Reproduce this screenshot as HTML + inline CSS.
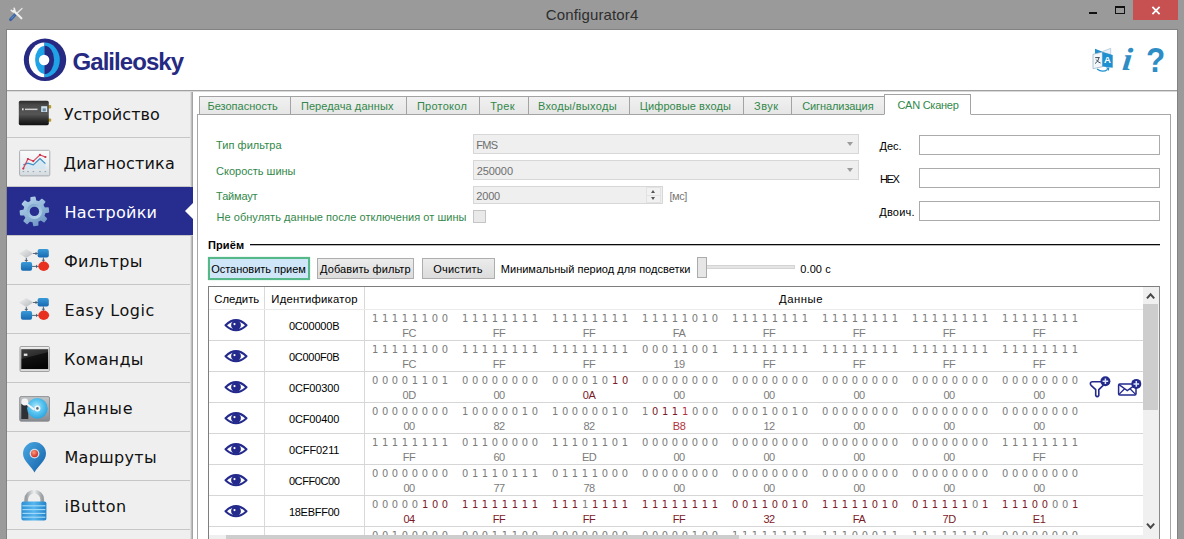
<!DOCTYPE html>
<html lang="ru"><head><meta charset="utf-8"><title>Configurator4</title>
<style>
html,body{margin:0;padding:0;background:#999;}
body{width:1184px;height:539px;overflow:hidden;position:relative;font-family:"Liberation Sans",sans-serif;}
.abs{position:absolute}
.t{position:absolute;white-space:pre;line-height:1}
#win{position:absolute;left:0;top:0;width:1184px;height:539px;background:#9a9a9a;overflow:hidden}
.titlebar{position:absolute;left:0;top:0;width:1184px;height:30px}
.header{position:absolute;left:7px;top:30px;width:1170px;height:60px;background:#fff;z-index:4}
.header>.abs{ }
.frame{position:absolute;left:6px;top:29px;width:1172px;height:520px;box-sizing:border-box;border:1px solid #828282;z-index:9;pointer-events:none}
.hshadow{position:absolute;left:7px;top:90px;width:1170px;height:2px;background:linear-gradient(#9f9f9f 0,#9f9f9f 50%,#d9d9d9 50%,#d9d9d9 100%);z-index:5}
.sidebar{position:absolute;left:7px;top:89px;width:186px;height:450px;background:#efefef;overflow:hidden}
.sitem{position:absolute;left:0;width:186px;height:49px;box-sizing:border-box;border-bottom:1px solid #c6c6c6}
.sitem.active{background:#262d8f;z-index:3}
.notch{position:absolute;right:0;top:16px;width:0;height:0;border-top:8px solid transparent;border-bottom:8px solid transparent;border-right:8.5px solid #fff}
.sideedge{position:absolute;left:183px;top:0;width:3px;height:450px;background:linear-gradient(90deg,#dedede 0,#dedede 33.3%,#bebebe 33.3%,#bebebe 66.6%,#a3a3a3 66.6%);z-index:2}
.content{position:absolute;left:0;top:0;width:1184px;height:539px}
.content:before{content:"";position:absolute;left:193px;top:92px;width:984px;height:447px;background:#fff}
.pane{position:absolute;left:197px;top:114px;width:974px;height:440px;box-sizing:border-box;border:1px solid #a6a6a6;background:#fff}
.tab{position:absolute;top:96px;height:19px;box-sizing:border-box;border:1px solid #a3a3a3;background:linear-gradient(#f1f1f1,#e6e6e6)}
.tab.act{top:94px;height:21px;background:#fff;border-bottom-color:#fff}
.combo{position:absolute;box-sizing:border-box;border:1px solid #d7d7d7;background:#efefef}
.combo .dd{position:absolute;right:5px;top:7px;width:0;height:0;border-left:3.5px solid transparent;border-right:3.5px solid transparent;border-top:4px solid #9c9c9c}
.combo .sp{position:absolute;right:1px;top:0;width:13px;height:14px;border:1px solid #e2e2e2;background:linear-gradient(#f1f1f1 0,#f1f1f1 50%,#e2e2e2 50%,#e2e2e2 57%,#f1f1f1 57%)}
.combo .up{position:absolute;left:4px;top:2px;width:0;height:0;border-left:2.5px solid transparent;border-right:2.5px solid transparent;border-bottom:3px solid #555}
.combo .dn{position:absolute;left:4px;top:9px;width:0;height:0;border-left:2.5px solid transparent;border-right:2.5px solid transparent;border-top:3px solid #555}
.chk{position:absolute;width:13px;height:13px;box-sizing:border-box;border:1px solid #c4c4c4;background:#e9e9e9}
.inp{position:absolute;box-sizing:border-box;border:1px solid #ababab;background:#fff}
.btn{position:absolute;box-sizing:border-box;border:1px solid #adadad;background:linear-gradient(#ececec,#dcdcdc)}
.btn.b1{border:2px solid #54b889;background:#cfe6f8;box-shadow:0 0 1px #8fd0ac}
.track{position:absolute;box-sizing:border-box;border:1px solid #d4d4d4;background:#e4e4e4}
.thumb{position:absolute;box-sizing:border-box;border:1px solid #ababab;background:#e6e6e6}
.table{position:absolute;left:208px;top:286px;width:952px;height:260px;box-sizing:border-box;border:1px solid #7e7e7e;border-right-color:#8a8a8a;background:#fff}
.table:before{content:"";position:absolute;left:55px;top:0;width:1px;height:248px;background:#d9d9d9}
.table:after{content:"";position:absolute;left:155px;top:0;width:1px;height:248px;background:#d9d9d9}
.rowline{position:absolute;left:209px;width:934px;height:1px;background:#d6d6d6}
.vsb{position:absolute;left:1143px;top:287px;width:16px;height:252px;background:#f0f0f0}
.vth{position:absolute;left:0;top:17px;width:15px;height:106px;background:#cdcdcd}
.hsb{position:absolute;left:209px;top:535px;width:934px;height:10px;background:#efefef}
.hth{position:absolute;left:17px;top:0;width:513px;height:10px;background:#cdcdcd}
</style></head>
<body><div id="win">
<div class="titlebar">
<span class="t " id="t0" style='left:545.73px;top:7.00px;font:normal normal 15px/1 "Liberation Sans", sans-serif;color:#2d2d2d;letter-spacing:0.143px;'>Configurator4</span>
<svg class="abs" style="left:9px;top:7px" width="15" height="15" viewBox="0 0 15 15">
<path d="M5.4 8.4 L13 1.4" stroke="#e4e4e4" stroke-width="1.3" stroke-linecap="round"/>
<path d="M1.6 12.6 L5.6 8.2" stroke="#3561a6" stroke-width="2.9" stroke-linecap="round"/>
<path d="M2.2 11.6 L5 8.6" stroke="#6f97cf" stroke-width="0.9" stroke-linecap="round"/>
<path d="M4.8 3.8 L12.4 11.3" stroke="#efefef" stroke-width="2.1" stroke-linecap="round"/>
<path d="M2.3 3.3 L4.3 5 L5.9 3.9 L5.2 1.3" stroke="#efefef" stroke-width="1.6" fill="none" stroke-linejoin="round" stroke-linecap="round"/>
</svg>
<div class="abs" style="left:1089px;top:12px;width:8px;height:2px;background:#111"></div>
<div class="abs" style="left:1115px;top:6px;width:10px;height:8px;box-sizing:border-box;border:1px solid #111;border-top-width:2px"></div>
<div class="abs closebtn" style="left:1133px;top:0;width:45px;height:20px;background:#c75050"><svg width="45" height="20" viewBox="0 0 45 20"><path d="M19.4 6.9 L26.6 14.1 M26.6 6.9 L19.4 14.1" stroke="#fff" stroke-width="1.8"/></svg></div>
</div>
<div class="header">
<svg class="abs" style="left:16px;top:6px" width="50" height="50" viewBox="0 0 50 50">
<circle cx="22" cy="23.8" r="21.2" fill="#262a82"/>
<clipPath id="cl"><rect x="0" y="0" width="21.5" height="50"/></clipPath>
<clipPath id="cr"><rect x="21.5" y="0" width="28.5" height="50"/></clipPath>
<ellipse cx="21.5" cy="23.9" rx="15.6" ry="17.3" fill="#fff" clip-path="url(#cl)"/>
<ellipse cx="21.5" cy="23.9" rx="15.3" ry="17.3" fill="#1fa3e6" clip-path="url(#cr)"/>
<ellipse cx="21.5" cy="23.9" rx="9.4" ry="14" fill="#1fa3e6" clip-path="url(#cl)"/>
<ellipse cx="21.5" cy="23.9" rx="9.6" ry="14.2" fill="#262a82" clip-path="url(#cr)"/>
<circle cx="21.1" cy="24.05" r="5.2" fill="#fff"/>
</svg>
<span class="t " id="t1" style='left:65.52px;top:19.60px;font:normal bold 24px/1 "Liberation Sans", sans-serif;color:#262a82;letter-spacing:-0.952px;'>Galileosky</span>
<svg class="abs" style="left:1083px;top:16px" width="26" height="28" viewBox="0 0 26 28">
<path d="M5 2.7 L12.6 5.8 L12.6 7.2 L5 8 Z" fill="#1e8fcf"/>
<path d="M12.7 5.4 L20.7 2.3 L20.7 8.6 L12.7 6.2 Z" fill="#e9f1f7" stroke="#9bb6cb" stroke-width="0.6"/>
<path d="M3 8.3 L12.4 6 L12.4 20.7 L3 22.7 Z" fill="#f3f7fa" stroke="#8ea9bf" stroke-width="0.7"/>
<path d="M12.4 6 L22.7 9 L22.7 21.7 L12.4 20.4 Z" fill="#1e8fcf"/>
<path d="M5.2 11.6 H9.6 M9 11.6 Q8.6 15.2 5 17.6 M6.2 13.6 Q8 16.4 10.6 17" stroke="#2d3a4a" stroke-width="0.9" fill="none"/>
<path d="M7 23 Q12.5 27.2 17.6 23.4" stroke="#1e8fcf" stroke-width="1.2" fill="none"/>
<path d="M16 21.6 L19.4 21.6 L18.8 25 Z" fill="#1e8fcf"/>
</svg>
<span class="t " id="t2" style='left:1097.06px;top:25.10px;font:normal bold 9.5px/1 "Liberation Sans", sans-serif;color:#fff;'>A</span>
<span class="t " id="t3" style='left:1114.16px;top:13.20px;font:italic bold 32px/1 "Liberation Serif", serif;color:#2f8dc6;transform:skewX(-6deg) scaleX(1.1);transform-origin:0 100%;'>i</span>
<span class="t " id="t4" style='left:1139.42px;top:11.60px;font:normal bold 35px/1 "Liberation Sans", sans-serif;color:#2f8dc6;transform:scaleX(0.9);transform-origin:0 100%;'>?</span>
</div>
<div class="hshadow"></div>
<div class="frame"></div>
<div class="sidebar">
<div class="sitem" style="top:0px">
<svg class="abs" style="left:10px;top:10px" width="36" height="30" viewBox="0 0 36 30">
<defs><linearGradient id="gd" x1="0" y1="0" x2="0" y2="1"><stop offset="0" stop-color="#2c2c2c"/><stop offset="0.18" stop-color="#4a4a4a"/><stop offset="0.55" stop-color="#555"/><stop offset="0.8" stop-color="#2b2b2b"/><stop offset="1" stop-color="#111"/></linearGradient></defs>
<rect x="31" y="6" width="3.2" height="3.4" rx="1" fill="#b59a2a"/><rect x="31" y="19.4" width="3.2" height="3.4" rx="1" fill="#b59a2a"/>
<rect x="1.8" y="1.8" width="30" height="24.4" rx="1.6" fill="url(#gd)"/>
<rect x="5" y="9.3" width="1.6" height="2" fill="#ddd"/><rect x="8" y="9.6" width="12.5" height="1.5" fill="#cfcfcf"/>
<rect x="24.2" y="7.2" width="6" height="5.8" fill="#cfe3f0"/><rect x="25.6" y="9.4" width="3.2" height="3" fill="#6d8aa0"/>
</svg>
<span class="t sb" id="t5" style='left:56.68px;top:17.70px;font:normal normal 16px/1 "DejaVu Sans", "Liberation Sans", sans-serif;color:#111;letter-spacing:0.069px;'>Устройство</span>
</div>
<div class="sitem" style="top:49px">
<svg class="abs" style="left:10px;top:10px" width="36" height="30" viewBox="0 0 36 30">
<defs><linearGradient id="gc" x1="0" y1="0" x2="0" y2="1"><stop offset="0" stop-color="#fbfbfb"/><stop offset="0.6" stop-color="#e9eef1"/><stop offset="1" stop-color="#d3d9dd"/></linearGradient></defs>
<rect x="2.6" y="2.3" width="30.2" height="25.6" rx="1.3" fill="url(#gc)" stroke="#a3a7aa" stroke-width="0.9"/>
<path d="M6.3 16.9 L10.9 15.2 L16.3 16.9 L23 10.6 L28.4 15.6 L28.4 21 L6.3 21 Z" fill="#cfe6f3" opacity="0.7"/>
<path d="M6.3 16.9 L10.9 15.2 L16.3 16.9 L23 10.6 L28.4 15.6" fill="none" stroke="#3b8fc4" stroke-width="1.2"/>
<path d="M6.3 20.6 L10.9 11 L16.3 13.1 L23 6.9 L28.4 9" fill="none" stroke="#d9455a" stroke-width="1.2"/>
<g fill="#cc3048"><circle cx="6.3" cy="20.6" r="1.1"/><circle cx="10.9" cy="11" r="1.1"/><circle cx="16.3" cy="13.1" r="1.1"/><circle cx="23" cy="6.9" r="1.1"/><circle cx="28.4" cy="9" r="1.1"/></g>
<g fill="#8fa3b0"><rect x="5.6" y="23.1" width="1.6" height="1"/><rect x="10.2" y="23.1" width="1.6" height="1"/><rect x="15.6" y="23.1" width="1.6" height="1"/><rect x="22.2" y="23.1" width="1.6" height="1"/><rect x="27.6" y="23.1" width="1.6" height="1"/></g>
</svg>
<span class="t sb" id="t6" style='left:56.48px;top:17.70px;font:normal normal 16px/1 "DejaVu Sans", "Liberation Sans", sans-serif;color:#111;letter-spacing:0.191px;'>Диагностика</span>
</div>
<div class="sitem active" style="top:98px">
<svg class="abs" style="left:10px;top:7px" width="36" height="36" viewBox="0 0 36 36">
<defs><linearGradient id="gg" x1="0.1" y1="0" x2="0.7" y2="1"><stop offset="0" stop-color="#b4d2ea"/><stop offset="0.5" stop-color="#94b8da"/><stop offset="1" stop-color="#6f97c4"/></linearGradient>
<linearGradient id="gg2" x1="0.2" y1="0" x2="0.8" y2="1"><stop offset="0" stop-color="#7fa6cc"/><stop offset="1" stop-color="#b7d7ec"/></linearGradient></defs>
<path d="M14.16 3.78 L17.87 3.41 L18.56 7.07 L22.14 8.14 L24.74 5.48 L27.63 7.84 L25.53 10.91 L27.30 14.21 L31.02 14.16 L31.39 17.87 L27.73 18.56 L26.66 22.14 L29.32 24.74 L26.96 27.63 L23.89 25.53 L20.59 27.30 L20.64 31.02 L16.93 31.39 L16.24 27.73 L12.66 26.66 L10.06 29.32 L7.17 26.96 L9.27 23.89 L7.50 20.59 L3.78 20.64 L3.41 16.93 L7.07 16.24 L8.14 12.66 L5.48 10.06 L7.84 7.17 L10.91 9.27 L14.21 7.50 Z" fill="url(#gg)" stroke="url(#gg)" stroke-width="1.6" stroke-linejoin="round"/>
<circle cx="17.4" cy="17.4" r="7.7" fill="url(#gg2)"/>
<circle cx="17.4" cy="17.4" r="4.7" fill="#262d8f"/>
</svg>
<span class="t sb" id="t7" style='left:57.58px;top:17.70px;font:normal normal 16px/1 "DejaVu Sans", "Liberation Sans", sans-serif;color:#fff;letter-spacing:0.253px;'>Настройки</span>
<div class="notch"></div>
</div>
<div class="sitem" style="top:147px">
<svg class="abs" style="left:10px;top:9px" width="36" height="32" viewBox="0 0 36 32">
<defs><linearGradient id="gb" x1="0" y1="0" x2="0" y2="1"><stop offset="0" stop-color="#3a9ad8"/><stop offset="1" stop-color="#1668b0"/></linearGradient>
<linearGradient id="gy" x1="0" y1="0" x2="1" y2="1"><stop offset="0" stop-color="#f2f2f2"/><stop offset="1" stop-color="#b4b8bb"/></linearGradient></defs>
<g stroke="#44566a" stroke-width="0.9" fill="none"><path d="M16 8.5 L21 8.5 M19 7 L19 10"/><path d="M9.3 12.8 L9.3 17 M7.8 15.4 L10.8 15.4"/><path d="M26.4 12.5 L26.4 17 M24.9 15.2 L27.9 15.2"/><path d="M15 21.4 L21.5 21.4 M19.6 19.9 L19.6 22.9"/></g>
<path d="M9.2 4 L16.4 8.5 L9.2 13 L2 8.5 Z" fill="url(#gy)"/>
<rect x="20.6" y="4" width="11.2" height="8.6" rx="2" fill="url(#gb)"/>
<rect x="3.9" y="17" width="11.2" height="8.8" rx="2" fill="url(#gb)"/>
<ellipse cx="26.7" cy="21.2" rx="5.4" ry="4.7" fill="#e8301f"/>
</svg>
<span class="t sb" id="t8" style='left:56.88px;top:17.70px;font:normal normal 16px/1 "DejaVu Sans", "Liberation Sans", sans-serif;color:#111;letter-spacing:0.443px;'>Фильтры</span>
</div>
<div class="sitem" style="top:196px">
<svg class="abs" style="left:10px;top:9px" width="36" height="32" viewBox="0 0 36 32">
<defs><linearGradient id="gb2" x1="0" y1="0" x2="0" y2="1"><stop offset="0" stop-color="#3a9ad8"/><stop offset="1" stop-color="#1668b0"/></linearGradient>
<linearGradient id="gy2" x1="0" y1="0" x2="1" y2="1"><stop offset="0" stop-color="#f2f2f2"/><stop offset="1" stop-color="#b4b8bb"/></linearGradient></defs>
<g stroke="#44566a" stroke-width="0.9" fill="none"><path d="M16 8.5 L21 8.5 M19 7 L19 10"/><path d="M9.3 12.8 L9.3 17 M7.8 15.4 L10.8 15.4"/><path d="M26.4 12.5 L26.4 17 M24.9 15.2 L27.9 15.2"/><path d="M15 21.4 L21.5 21.4 M19.6 19.9 L19.6 22.9"/></g>
<path d="M9.2 4 L16.4 8.5 L9.2 13 L2 8.5 Z" fill="url(#gy2)"/>
<rect x="20.6" y="4" width="11.2" height="8.6" rx="2" fill="url(#gb2)"/>
<rect x="3.9" y="17" width="11.2" height="8.8" rx="2" fill="url(#gb2)"/>
<ellipse cx="26.7" cy="21.2" rx="5.4" ry="4.7" fill="#e8301f"/>
</svg>
<span class="t sb" id="t9" style='left:57.48px;top:17.70px;font:normal normal 16px/1 "DejaVu Sans", "Liberation Sans", sans-serif;color:#111;letter-spacing:0.592px;'>Easy Logic</span>
</div>
<div class="sitem" style="top:245px">
<svg class="abs" style="left:10px;top:9px" width="36" height="32" viewBox="0 0 36 32">
<defs><linearGradient id="gt" x1="0" y1="0" x2="0.35" y2="1"><stop offset="0" stop-color="#3f3f3f"/><stop offset="0.42" stop-color="#2e2e2e"/><stop offset="0.46" stop-color="#121212"/><stop offset="1" stop-color="#050505"/></linearGradient>
<linearGradient id="gtf" x1="0" y1="0" x2="0" y2="1"><stop offset="0" stop-color="#f4f4f4"/><stop offset="0.15" stop-color="#d9d9d9"/><stop offset="0.85" stop-color="#bdbdbd"/><stop offset="1" stop-color="#e6e6e6"/></linearGradient></defs>
<rect x="3" y="3.5" width="29.4" height="25" rx="1" fill="url(#gtf)" stroke="#8e8e8e" stroke-width="0.8"/>
<rect x="4.3" y="6.2" width="26.8" height="19.8" fill="url(#gt)"/>
<rect x="6.8" y="10.6" width="3.6" height="2.3" fill="#e4e4e4"/>
</svg>
<span class="t sb" id="t10" style='left:57.08px;top:17.70px;font:normal normal 16px/1 "DejaVu Sans", "Liberation Sans", sans-serif;color:#111;letter-spacing:0.365px;'>Команды</span>
</div>
<div class="sitem" style="top:294px">
<svg class="abs" style="left:10px;top:9px" width="36" height="34" viewBox="0 0 36 34">
<defs><linearGradient id="gh" x1="0" y1="0" x2="0" y2="1"><stop offset="0" stop-color="#c3c6c8"/><stop offset="1" stop-color="#888c90"/></linearGradient>
<radialGradient id="gdisc" cx="0.45" cy="0.42" r="0.6"><stop offset="0" stop-color="#b4e8fb"/><stop offset="0.5" stop-color="#5cc6f0"/><stop offset="1" stop-color="#2ba4e0"/></radialGradient></defs>
<rect x="2.7" y="4.6" width="29.8" height="24.6" rx="1.4" fill="url(#gh)" stroke="#7e8286" stroke-width="0.8"/>
<rect x="4.3" y="12" width="7" height="15" fill="#2d3136"/>
<circle cx="20.4" cy="16.4" r="10.3" fill="url(#gdisc)"/>
<circle cx="20.4" cy="16.4" r="3" fill="#eef7fb"/><circle cx="20.4" cy="16.4" r="1.3" fill="#5b6a75"/>
<circle cx="7.8" cy="10" r="3.4" fill="#f4f4f4"/>
<path d="M8.6 11 L16.6 17.2" stroke="#f4f4f4" stroke-width="2" fill="none" stroke-linecap="round"/>
</svg>
<span class="t sb" id="t11" style='left:56.18px;top:17.70px;font:normal normal 16px/1 "DejaVu Sans", "Liberation Sans", sans-serif;color:#111;letter-spacing:0.739px;'>Данные</span>
</div>
<div class="sitem" style="top:343px">
<svg class="abs" style="left:12px;top:6.5px" width="32" height="38" viewBox="0 0 32 38">
<defs><linearGradient id="gp" x1="0" y1="0" x2="1" y2="1"><stop offset="0" stop-color="#4aa9e4"/><stop offset="1" stop-color="#125fa6"/></linearGradient>
<radialGradient id="gr" cx="0.4" cy="0.35" r="0.7"><stop offset="0" stop-color="#ff9a80"/><stop offset="1" stop-color="#c8281c"/></radialGradient></defs>
<path d="M15.5 33.6 C12 27 4 22 4 14.6 A11.5 11.5 0 0 1 27 14.6 C27 22 19 27 15.5 33.6 Z" fill="url(#gp)"/>
<circle cx="15.5" cy="14.6" r="4.9" fill="#cfdde8"/>
<circle cx="15.5" cy="14.6" r="3.6" fill="url(#gr)"/>
</svg>
<span class="t sb" id="t12" style='left:57.48px;top:17.70px;font:normal normal 16px/1 "DejaVu Sans", "Liberation Sans", sans-serif;color:#111;letter-spacing:0.294px;'>Маршруты</span>
</div>
<div class="sitem" style="top:392px">
<svg class="abs" style="left:10px;top:6px" width="36" height="38" viewBox="0 0 36 38">
<defs><linearGradient id="gl" x1="0" y1="0" x2="1" y2="0"><stop offset="0" stop-color="#2d8fd4"/><stop offset="0.5" stop-color="#57b6ee"/><stop offset="1" stop-color="#2182c8"/></linearGradient>
<linearGradient id="gs" x1="0" y1="0" x2="1" y2="0"><stop offset="0" stop-color="#9a9ea1"/><stop offset="0.5" stop-color="#eef0f1"/><stop offset="1" stop-color="#9a9ea1"/></linearGradient></defs>
<path d="M9.2 16 L9.2 12.6 A8 8 0 0 1 25.2 12.6 L25.2 16" stroke="url(#gs)" stroke-width="3.8" fill="none"/>
<rect x="4.4" y="14.6" width="25" height="19" rx="2" fill="url(#gl)"/>
<g stroke="#a5dcf9" stroke-width="1.1"><path d="M5.4 18.8 H28.4"/><path d="M5.4 22.6 H28.4"/><path d="M5.4 26.4 H28.4"/><path d="M5.4 30.2 H28.4"/></g>
</svg>
<span class="t sb" id="t13" style='left:57.48px;top:17.70px;font:normal normal 16px/1 "DejaVu Sans", "Liberation Sans", sans-serif;color:#111;letter-spacing:0.613px;'>iButton</span>
</div>
<div class="sitem" style="top:441px">
</div>
<div class="sideedge"></div>
</div>
<div class="content">
<div class="pane"></div>
<div class="tab" style="left:199px;width:92px">
</div>
<span class="t " id="t14" style='left:207.41px;top:101.00px;font:normal normal 11px/1 "Liberation Sans", sans-serif;color:#32884a;letter-spacing:0.010px;'>Безопасность</span>
<div class="tab" style="left:290px;width:117px">
</div>
<span class="t " id="t15" style='left:300.90px;top:101.00px;font:normal normal 11px/1 "Liberation Sans", sans-serif;color:#32884a;letter-spacing:0.085px;'>Передача данных</span>
<div class="tab" style="left:406px;width:74px">
</div>
<span class="t " id="t16" style='left:416.90px;top:101.00px;font:normal normal 11px/1 "Liberation Sans", sans-serif;color:#32884a;letter-spacing:0.252px;'>Протокол</span>
<div class="tab" style="left:479px;width:50px">
</div>
<span class="t " id="t17" style='left:490.31px;top:101.00px;font:normal normal 11px/1 "Liberation Sans", sans-serif;color:#32884a;letter-spacing:0.333px;'>Трек</span>
<div class="tab" style="left:528px;width:102px">
</div>
<span class="t " id="t18" style='left:537.90px;top:101.00px;font:normal normal 11px/1 "Liberation Sans", sans-serif;color:#32884a;letter-spacing:0.317px;'>Входы/выходы</span>
<div class="tab" style="left:629px;width:115px">
</div>
<span class="t " id="t19" style='left:639.80px;top:101.00px;font:normal normal 11px/1 "Liberation Sans", sans-serif;color:#32884a;letter-spacing:0.091px;'>Цифровые входы</span>
<div class="tab" style="left:743px;width:49px">
</div>
<span class="t " id="t20" style='left:754.11px;top:101.00px;font:normal normal 11px/1 "Liberation Sans", sans-serif;color:#32884a;letter-spacing:0.457px;'>Звук</span>
<div class="tab" style="left:791px;width:95px">
</div>
<span class="t " id="t21" style='left:802.21px;top:101.00px;font:normal normal 11px/1 "Liberation Sans", sans-serif;color:#32884a;letter-spacing:-0.094px;'>Сигнализация</span>
<div class="tab act" style="left:884px;width:87px"></div>
<span class="t " id="t22" style='left:897.40px;top:99.70px;font:normal normal 11px/1 "Liberation Sans", sans-serif;color:#32884a;letter-spacing:-0.253px;'>CAN Сканер</span>
<span class="t " id="t23" style='left:216.10px;top:140.00px;font:normal normal 11px/1 "Liberation Sans", sans-serif;color:#32884a;letter-spacing:0.030px;'>Тип фильтра</span>
<span class="t " id="t24" style='left:216.10px;top:166.00px;font:normal normal 11px/1 "Liberation Sans", sans-serif;color:#32884a;letter-spacing:-0.010px;'>Скорость шины</span>
<span class="t " id="t25" style='left:216.10px;top:191.20px;font:normal normal 11px/1 "Liberation Sans", sans-serif;color:#32884a;letter-spacing:-0.172px;'>Таймаут</span>
<span class="t " id="t26" style='left:216.50px;top:212.40px;font:normal normal 11px/1 "Liberation Sans", sans-serif;color:#32884a;letter-spacing:0.040px;'>Не обнулять данные после отключения от шины</span>
<div class="combo" style="left:473px;top:134px;width:386px;height:20px"><i class="dd"></i></div>
<div class="combo" style="left:473px;top:160px;width:386px;height:20px"><i class="dd"></i></div>
<div class="combo" style="left:473px;top:186px;width:190px;height:18px"><i class="sp"><b class="up"></b><b class="dn"></b></i></div>
<div class="chk" style="left:473px;top:210px"></div>
<span class="t " id="t27" style='left:476.31px;top:140.00px;font:normal normal 11px/1 "Liberation Sans", sans-serif;color:#6e6e6e;letter-spacing:-0.681px;'>FMS</span>
<span class="t " id="t28" style='left:476.70px;top:166.00px;font:normal normal 11px/1 "Liberation Sans", sans-serif;color:#6e6e6e;letter-spacing:-0.071px;'>250000</span>
<span class="t " id="t29" style='left:476.31px;top:190.60px;font:normal normal 11px/1 "Liberation Sans", sans-serif;color:#6e6e6e;letter-spacing:-0.199px;'>2000</span>
<span class="t " id="t30" style='left:669.50px;top:190.90px;font:normal normal 11px/1 "Liberation Sans", sans-serif;color:#777;letter-spacing:-0.474px;'>[мс]</span>
<span class="t " id="t31" style='left:879.50px;top:141.30px;font:normal normal 11px/1 "Liberation Sans", sans-serif;color:#000;letter-spacing:-0.034px;'>Дес.</span>
<span class="t " id="t32" style='left:879.90px;top:173.80px;font:normal normal 11px/1 "Liberation Sans", sans-serif;color:#000;letter-spacing:-1.345px;'>HEX</span>
<span class="t " id="t33" style='left:879.30px;top:207.20px;font:normal normal 11px/1 "Liberation Sans", sans-serif;color:#000;letter-spacing:0.193px;'>Двоич.</span>
<div class="inp" style="left:919px;top:135px;width:241px;height:20px"></div>
<div class="inp" style="left:919px;top:168px;width:241px;height:20px"></div>
<div class="inp" style="left:919px;top:201px;width:241px;height:20px"></div>
<span class="t " id="t34" style='left:207.91px;top:239.80px;font:normal bold 11px/1 "Liberation Sans", sans-serif;color:#000;letter-spacing:0.147px;'>Приём</span>
<div class="abs" style="left:250px;top:244px;width:910px;height:1px;background:#0a0a0a;box-shadow:0 1px 0 rgba(0,0,0,0.28)"></div>
<div class="btn b1" style="left:208px;top:257px;width:102px;height:23px"></div>
<div class="btn" style="left:317px;top:258px;width:97px;height:21px"></div>
<div class="btn" style="left:422px;top:258px;width:73px;height:21px"></div>
<span class="t " id="t35" style='left:211.20px;top:264.20px;font:normal normal 11px/1 "Liberation Sans", sans-serif;color:#000;letter-spacing:-0.019px;'>Остановить прием</span>
<span class="t " id="t36" style='left:320.11px;top:264.20px;font:normal normal 11px/1 "Liberation Sans", sans-serif;color:#000;letter-spacing:0.085px;'>Добавить фильтр</span>
<span class="t " id="t37" style='left:433.20px;top:264.20px;font:normal normal 11px/1 "Liberation Sans", sans-serif;color:#000;letter-spacing:0.212px;'>Очистить</span>
<span class="t " id="t38" style='left:500.81px;top:264.20px;font:normal normal 11px/1 "Liberation Sans", sans-serif;color:#000;letter-spacing:0.012px;'>Минимальный период для подсветки</span>
<div class="track" style="left:705px;top:265px;width:90px;height:4px"></div>
<div class="thumb" style="left:697px;top:257px;width:10px;height:21px"></div>
<span class="t " id="t39" style='left:800.30px;top:263.60px;font:normal normal 11px/1 "Liberation Sans", sans-serif;color:#000;letter-spacing:0.087px;'>0.00 с</span>
<div class="table">
</div>
<div class="rowline" style="top:309px;background:#ebebeb"></div>
<span class="t " id="t40" style='left:214.29px;top:293.60px;font:normal normal 11.3px/1 "Liberation Sans", sans-serif;color:#000;letter-spacing:0.038px;'>Следить</span>
<span class="t " id="t41" style='left:271.29px;top:293.60px;font:normal normal 11.3px/1 "Liberation Sans", sans-serif;color:#000;letter-spacing:0.250px;'>Идентификатор</span>
<span class="t " id="t42" style='left:778.99px;top:293.60px;font:normal normal 11.3px/1 "Liberation Sans", sans-serif;color:#000;letter-spacing:0.531px;'>Данные</span>
<div class="rowline" style="top:340px"></div>
<svg class="abs" style="left:224px;top:319px" width="24" height="13" viewBox="0 0 24 13">
<path d="M1.5 6.2 Q12 -4 22.5 6.2 Q12 16.4 1.5 6.2 Z" fill="#fff" stroke="#232a8c" stroke-width="2" stroke-linejoin="round"/>
<circle cx="12" cy="6.1" r="4.9" fill="#232a8c"/><circle cx="10.5" cy="5.1" r="1.1" fill="#fff"/></svg>
<span class="t " id="t43" style='left:288.90px;top:320.60px;font:normal normal 11px/1 "Liberation Sans", sans-serif;color:#000;letter-spacing:-0.189px;'>0C00000B</span>
<span class="t bin" id="t44" style='left:371.90px;top:312.60px;font:normal normal 11px/1 "DejaVu Sans Condensed", "Liberation Sans", sans-serif;color:#7b7b7b;letter-spacing:0.275px;'>1 1 1 1 1 1 0 0</span>
<span class="t hex" id="t45" style='left:402.19px;top:327.50px;font:normal normal 11px/1 "Liberation Sans", sans-serif;color:#7b7b7b;letter-spacing:-0.450px;'>FC</span>
<span class="t bin" id="t46" style='left:461.90px;top:312.60px;font:normal normal 11px/1 "DejaVu Sans Condensed", "Liberation Sans", sans-serif;color:#7b7b7b;letter-spacing:0.275px;'>1 1 1 1 1 1 1 1</span>
<span class="t hex" id="t47" style='left:492.80px;top:327.50px;font:normal normal 11px/1 "Liberation Sans", sans-serif;color:#7b7b7b;letter-spacing:-0.450px;'>FF</span>
<span class="t bin" id="t48" style='left:551.90px;top:312.60px;font:normal normal 11px/1 "DejaVu Sans Condensed", "Liberation Sans", sans-serif;color:#7b7b7b;letter-spacing:0.275px;'>1 1 1 1 1 1 1 1</span>
<span class="t hex" id="t49" style='left:582.80px;top:327.50px;font:normal normal 11px/1 "Liberation Sans", sans-serif;color:#7b7b7b;letter-spacing:-0.450px;'>FF</span>
<span class="t bin" id="t50" style='left:641.90px;top:312.60px;font:normal normal 11px/1 "DejaVu Sans Condensed", "Liberation Sans", sans-serif;color:#7b7b7b;letter-spacing:0.275px;'>1 1 1 1 1 0 1 0</span>
<span class="t hex" id="t51" style='left:672.80px;top:327.50px;font:normal normal 11px/1 "Liberation Sans", sans-serif;color:#7b7b7b;letter-spacing:-0.450px;'>FA</span>
<span class="t bin" id="t52" style='left:731.90px;top:312.60px;font:normal normal 11px/1 "DejaVu Sans Condensed", "Liberation Sans", sans-serif;color:#7b7b7b;letter-spacing:0.275px;'>1 1 1 1 1 1 1 1</span>
<span class="t hex" id="t53" style='left:762.80px;top:327.50px;font:normal normal 11px/1 "Liberation Sans", sans-serif;color:#7b7b7b;letter-spacing:-0.450px;'>FF</span>
<span class="t bin" id="t54" style='left:821.90px;top:312.60px;font:normal normal 11px/1 "DejaVu Sans Condensed", "Liberation Sans", sans-serif;color:#7b7b7b;letter-spacing:0.275px;'>1 1 1 1 1 1 1 1</span>
<span class="t hex" id="t55" style='left:852.80px;top:327.50px;font:normal normal 11px/1 "Liberation Sans", sans-serif;color:#7b7b7b;letter-spacing:-0.450px;'>FF</span>
<span class="t bin" id="t56" style='left:911.90px;top:312.60px;font:normal normal 11px/1 "DejaVu Sans Condensed", "Liberation Sans", sans-serif;color:#7b7b7b;letter-spacing:0.275px;'>1 1 1 1 1 1 1 1</span>
<span class="t hex" id="t57" style='left:942.80px;top:327.50px;font:normal normal 11px/1 "Liberation Sans", sans-serif;color:#7b7b7b;letter-spacing:-0.450px;'>FF</span>
<span class="t bin" id="t58" style='left:1001.90px;top:312.60px;font:normal normal 11px/1 "DejaVu Sans Condensed", "Liberation Sans", sans-serif;color:#7b7b7b;letter-spacing:0.275px;'>1 1 1 1 1 1 1 1</span>
<span class="t hex" id="t59" style='left:1032.80px;top:327.50px;font:normal normal 11px/1 "Liberation Sans", sans-serif;color:#7b7b7b;letter-spacing:-0.450px;'>FF</span>
<div class="rowline" style="top:371px"></div>
<svg class="abs" style="left:224px;top:350px" width="24" height="13" viewBox="0 0 24 13">
<path d="M1.5 6.2 Q12 -4 22.5 6.2 Q12 16.4 1.5 6.2 Z" fill="#fff" stroke="#232a8c" stroke-width="2" stroke-linejoin="round"/>
<circle cx="12" cy="6.1" r="4.9" fill="#232a8c"/><circle cx="10.5" cy="5.1" r="1.1" fill="#fff"/></svg>
<span class="t " id="t60" style='left:288.90px;top:351.60px;font:normal normal 11px/1 "Liberation Sans", sans-serif;color:#000;letter-spacing:-0.263px;'>0C000F0B</span>
<span class="t bin" id="t61" style='left:371.90px;top:343.60px;font:normal normal 11px/1 "DejaVu Sans Condensed", "Liberation Sans", sans-serif;color:#7b7b7b;letter-spacing:0.275px;'>1 1 1 1 1 1 0 0</span>
<span class="t hex" id="t62" style='left:402.19px;top:358.50px;font:normal normal 11px/1 "Liberation Sans", sans-serif;color:#7b7b7b;letter-spacing:-0.450px;'>FC</span>
<span class="t bin" id="t63" style='left:461.90px;top:343.60px;font:normal normal 11px/1 "DejaVu Sans Condensed", "Liberation Sans", sans-serif;color:#7b7b7b;letter-spacing:0.275px;'>1 1 1 1 1 1 1 1</span>
<span class="t hex" id="t64" style='left:492.80px;top:358.50px;font:normal normal 11px/1 "Liberation Sans", sans-serif;color:#7b7b7b;letter-spacing:-0.450px;'>FF</span>
<span class="t bin" id="t65" style='left:551.90px;top:343.60px;font:normal normal 11px/1 "DejaVu Sans Condensed", "Liberation Sans", sans-serif;color:#7b7b7b;letter-spacing:0.275px;'>1 1 1 1 1 1 1 1</span>
<span class="t hex" id="t66" style='left:582.80px;top:358.50px;font:normal normal 11px/1 "Liberation Sans", sans-serif;color:#7b7b7b;letter-spacing:-0.450px;'>FF</span>
<span class="t bin" id="t67" style='left:641.90px;top:343.60px;font:normal normal 11px/1 "DejaVu Sans Condensed", "Liberation Sans", sans-serif;color:#7b7b7b;letter-spacing:0.275px;'>0 0 0 1 1 0 0 1</span>
<span class="t hex" id="t68" style='left:673.40px;top:358.50px;font:normal normal 11px/1 "Liberation Sans", sans-serif;color:#7b7b7b;letter-spacing:-0.450px;'>19</span>
<span class="t bin" id="t69" style='left:731.90px;top:343.60px;font:normal normal 11px/1 "DejaVu Sans Condensed", "Liberation Sans", sans-serif;color:#7b7b7b;letter-spacing:0.275px;'>1 1 1 1 1 1 1 1</span>
<span class="t hex" id="t70" style='left:762.80px;top:358.50px;font:normal normal 11px/1 "Liberation Sans", sans-serif;color:#7b7b7b;letter-spacing:-0.450px;'>FF</span>
<span class="t bin" id="t71" style='left:821.90px;top:343.60px;font:normal normal 11px/1 "DejaVu Sans Condensed", "Liberation Sans", sans-serif;color:#7b7b7b;letter-spacing:0.275px;'>1 1 1 1 1 1 1 1</span>
<span class="t hex" id="t72" style='left:852.80px;top:358.50px;font:normal normal 11px/1 "Liberation Sans", sans-serif;color:#7b7b7b;letter-spacing:-0.450px;'>FF</span>
<span class="t bin" id="t73" style='left:911.90px;top:343.60px;font:normal normal 11px/1 "DejaVu Sans Condensed", "Liberation Sans", sans-serif;color:#7b7b7b;letter-spacing:0.275px;'>1 1 1 1 1 1 1 1</span>
<span class="t hex" id="t74" style='left:942.80px;top:358.50px;font:normal normal 11px/1 "Liberation Sans", sans-serif;color:#7b7b7b;letter-spacing:-0.450px;'>FF</span>
<span class="t bin" id="t75" style='left:1001.90px;top:343.60px;font:normal normal 11px/1 "DejaVu Sans Condensed", "Liberation Sans", sans-serif;color:#7b7b7b;letter-spacing:0.275px;'>1 1 1 1 1 1 1 1</span>
<span class="t hex" id="t76" style='left:1032.80px;top:358.50px;font:normal normal 11px/1 "Liberation Sans", sans-serif;color:#7b7b7b;letter-spacing:-0.450px;'>FF</span>
<div class="rowline" style="top:402px"></div>
<svg class="abs" style="left:224px;top:381px" width="24" height="13" viewBox="0 0 24 13">
<path d="M1.5 6.2 Q12 -4 22.5 6.2 Q12 16.4 1.5 6.2 Z" fill="#fff" stroke="#232a8c" stroke-width="2" stroke-linejoin="round"/>
<circle cx="12" cy="6.1" r="4.9" fill="#232a8c"/><circle cx="10.5" cy="5.1" r="1.1" fill="#fff"/></svg>
<span class="t " id="t77" style='left:288.90px;top:382.60px;font:normal normal 11px/1 "Liberation Sans", sans-serif;color:#000;letter-spacing:-0.111px;'>0CF00300</span>
<span class="t bin" id="t78" style='left:371.90px;top:374.60px;font:normal normal 11px/1 "DejaVu Sans Condensed", "Liberation Sans", sans-serif;color:#7b7b7b;letter-spacing:0.275px;'>0 0 0 0 1 1 0 1</span>
<span class="t hex" id="t79" style='left:402.49px;top:389.50px;font:normal normal 11px/1 "Liberation Sans", sans-serif;color:#7b7b7b;letter-spacing:-0.450px;'>0D</span>
<span class="t bin" id="t80" style='left:461.90px;top:374.60px;font:normal normal 11px/1 "DejaVu Sans Condensed", "Liberation Sans", sans-serif;color:#7b7b7b;letter-spacing:0.275px;'>0 0 0 0 0 0 0 0</span>
<span class="t hex" id="t81" style='left:493.40px;top:389.50px;font:normal normal 11px/1 "Liberation Sans", sans-serif;color:#7b7b7b;letter-spacing:-0.450px;'>00</span>
<span class="t bin" id="t82" style='left:551.90px;top:374.60px;font:normal normal 11px/1 "DejaVu Sans Condensed", "Liberation Sans", sans-serif;color:#7b7b7b;letter-spacing:0.275px;'>0 0 0 0 1 0</span>
<span class="t bin" id="t83" style='left:611.90px;top:374.60px;font:normal normal 11px/1 "DejaVu Sans Condensed", "Liberation Sans", sans-serif;color:#7c1a28;letter-spacing:0.275px;'>1 0</span>
<span class="t hex" id="t84" style='left:582.79px;top:389.50px;font:normal normal 11px/1 "Liberation Sans", sans-serif;color:#7c1a28;letter-spacing:-0.450px;'>0A</span>
<span class="t bin" id="t85" style='left:641.90px;top:374.60px;font:normal normal 11px/1 "DejaVu Sans Condensed", "Liberation Sans", sans-serif;color:#7b7b7b;letter-spacing:0.275px;'>0 0 0 0 0 0 0 0</span>
<span class="t hex" id="t86" style='left:673.40px;top:389.50px;font:normal normal 11px/1 "Liberation Sans", sans-serif;color:#7b7b7b;letter-spacing:-0.450px;'>00</span>
<span class="t bin" id="t87" style='left:731.90px;top:374.60px;font:normal normal 11px/1 "DejaVu Sans Condensed", "Liberation Sans", sans-serif;color:#7b7b7b;letter-spacing:0.275px;'>0 0 0 0 0 0 0 0</span>
<span class="t hex" id="t88" style='left:763.40px;top:389.50px;font:normal normal 11px/1 "Liberation Sans", sans-serif;color:#7b7b7b;letter-spacing:-0.450px;'>00</span>
<span class="t bin" id="t89" style='left:821.90px;top:374.60px;font:normal normal 11px/1 "DejaVu Sans Condensed", "Liberation Sans", sans-serif;color:#7b7b7b;letter-spacing:0.275px;'>0 0 0 0 0 0 0 0</span>
<span class="t hex" id="t90" style='left:853.40px;top:389.50px;font:normal normal 11px/1 "Liberation Sans", sans-serif;color:#7b7b7b;letter-spacing:-0.450px;'>00</span>
<span class="t bin" id="t91" style='left:911.90px;top:374.60px;font:normal normal 11px/1 "DejaVu Sans Condensed", "Liberation Sans", sans-serif;color:#7b7b7b;letter-spacing:0.275px;'>0 0 0 0 0 0 0 0</span>
<span class="t hex" id="t92" style='left:943.40px;top:389.50px;font:normal normal 11px/1 "Liberation Sans", sans-serif;color:#7b7b7b;letter-spacing:-0.450px;'>00</span>
<span class="t bin" id="t93" style='left:1001.90px;top:374.60px;font:normal normal 11px/1 "DejaVu Sans Condensed", "Liberation Sans", sans-serif;color:#7b7b7b;letter-spacing:0.275px;'>0 0 0 0 0 0 0 0</span>
<span class="t hex" id="t94" style='left:1033.40px;top:389.50px;font:normal normal 11px/1 "Liberation Sans", sans-serif;color:#7b7b7b;letter-spacing:-0.450px;'>00</span>
<div class="rowline" style="top:433px"></div>
<svg class="abs" style="left:224px;top:412px" width="24" height="13" viewBox="0 0 24 13">
<path d="M1.5 6.2 Q12 -4 22.5 6.2 Q12 16.4 1.5 6.2 Z" fill="#fff" stroke="#232a8c" stroke-width="2" stroke-linejoin="round"/>
<circle cx="12" cy="6.1" r="4.9" fill="#232a8c"/><circle cx="10.5" cy="5.1" r="1.1" fill="#fff"/></svg>
<span class="t " id="t95" style='left:288.90px;top:413.60px;font:normal normal 11px/1 "Liberation Sans", sans-serif;color:#000;letter-spacing:-0.111px;'>0CF00400</span>
<span class="t bin" id="t96" style='left:371.90px;top:405.60px;font:normal normal 11px/1 "DejaVu Sans Condensed", "Liberation Sans", sans-serif;color:#7b7b7b;letter-spacing:0.275px;'>0 0 0 0 0 0 0 0</span>
<span class="t hex" id="t97" style='left:403.40px;top:420.50px;font:normal normal 11px/1 "Liberation Sans", sans-serif;color:#7b7b7b;letter-spacing:-0.450px;'>00</span>
<span class="t bin" id="t98" style='left:461.90px;top:405.60px;font:normal normal 11px/1 "DejaVu Sans Condensed", "Liberation Sans", sans-serif;color:#7b7b7b;letter-spacing:0.275px;'>1 0 0 0 0 0 1 0</span>
<span class="t hex" id="t99" style='left:493.40px;top:420.50px;font:normal normal 11px/1 "Liberation Sans", sans-serif;color:#7b7b7b;letter-spacing:-0.450px;'>82</span>
<span class="t bin" id="t100" style='left:551.90px;top:405.60px;font:normal normal 11px/1 "DejaVu Sans Condensed", "Liberation Sans", sans-serif;color:#7b7b7b;letter-spacing:0.275px;'>1 0 0 0 0 0 1 0</span>
<span class="t hex" id="t101" style='left:583.40px;top:420.50px;font:normal normal 11px/1 "Liberation Sans", sans-serif;color:#7b7b7b;letter-spacing:-0.450px;'>82</span>
<span class="t bin" id="t102" style='left:641.90px;top:405.60px;font:normal normal 11px/1 "DejaVu Sans Condensed", "Liberation Sans", sans-serif;color:#7b7b7b;letter-spacing:0.275px;'>1</span>
<span class="t bin" id="t103" style='left:651.90px;top:405.60px;font:normal normal 11px/1 "DejaVu Sans Condensed", "Liberation Sans", sans-serif;color:#7c1a28;letter-spacing:0.275px;'>0 1 1</span>
<span class="t bin" id="t104" style='left:681.90px;top:405.60px;font:normal normal 11px/1 "DejaVu Sans Condensed", "Liberation Sans", sans-serif;color:#b2303c;letter-spacing:0.275px;'>1</span>
<span class="t bin" id="t105" style='left:691.90px;top:405.60px;font:normal normal 11px/1 "DejaVu Sans Condensed", "Liberation Sans", sans-serif;color:#7b7b7b;letter-spacing:0.275px;'>0 0 0</span>
<span class="t hex" id="t106" style='left:672.79px;top:420.50px;font:normal normal 11px/1 "Liberation Sans", sans-serif;color:#b2303c;letter-spacing:-0.450px;'>B8</span>
<span class="t bin" id="t107" style='left:731.90px;top:405.60px;font:normal normal 11px/1 "DejaVu Sans Condensed", "Liberation Sans", sans-serif;color:#7b7b7b;letter-spacing:0.275px;'>0 0 0 1 0 0 1 0</span>
<span class="t hex" id="t108" style='left:763.40px;top:420.50px;font:normal normal 11px/1 "Liberation Sans", sans-serif;color:#7b7b7b;letter-spacing:-0.450px;'>12</span>
<span class="t bin" id="t109" style='left:821.90px;top:405.60px;font:normal normal 11px/1 "DejaVu Sans Condensed", "Liberation Sans", sans-serif;color:#7b7b7b;letter-spacing:0.275px;'>0 0 0 0 0 0 0 0</span>
<span class="t hex" id="t110" style='left:853.40px;top:420.50px;font:normal normal 11px/1 "Liberation Sans", sans-serif;color:#7b7b7b;letter-spacing:-0.450px;'>00</span>
<span class="t bin" id="t111" style='left:911.90px;top:405.60px;font:normal normal 11px/1 "DejaVu Sans Condensed", "Liberation Sans", sans-serif;color:#7b7b7b;letter-spacing:0.275px;'>0 0 0 0 0 0 0 0</span>
<span class="t hex" id="t112" style='left:943.40px;top:420.50px;font:normal normal 11px/1 "Liberation Sans", sans-serif;color:#7b7b7b;letter-spacing:-0.450px;'>00</span>
<span class="t bin" id="t113" style='left:1001.90px;top:405.60px;font:normal normal 11px/1 "DejaVu Sans Condensed", "Liberation Sans", sans-serif;color:#7b7b7b;letter-spacing:0.275px;'>0 0 0 0 0 0 0 0</span>
<span class="t hex" id="t114" style='left:1033.40px;top:420.50px;font:normal normal 11px/1 "Liberation Sans", sans-serif;color:#7b7b7b;letter-spacing:-0.450px;'>00</span>
<div class="rowline" style="top:464px"></div>
<svg class="abs" style="left:224px;top:443px" width="24" height="13" viewBox="0 0 24 13">
<path d="M1.5 6.2 Q12 -4 22.5 6.2 Q12 16.4 1.5 6.2 Z" fill="#fff" stroke="#232a8c" stroke-width="2" stroke-linejoin="round"/>
<circle cx="12" cy="6.1" r="4.9" fill="#232a8c"/><circle cx="10.5" cy="5.1" r="1.1" fill="#fff"/></svg>
<span class="t " id="t115" style='left:288.90px;top:444.60px;font:normal normal 11px/1 "Liberation Sans", sans-serif;color:#000;letter-spacing:-0.083px;'>0CFF0211</span>
<span class="t bin" id="t116" style='left:371.90px;top:436.60px;font:normal normal 11px/1 "DejaVu Sans Condensed", "Liberation Sans", sans-serif;color:#7b7b7b;letter-spacing:0.275px;'>1 1 1 1 1 1 1 1</span>
<span class="t hex" id="t117" style='left:402.80px;top:451.50px;font:normal normal 11px/1 "Liberation Sans", sans-serif;color:#7b7b7b;letter-spacing:-0.450px;'>FF</span>
<span class="t bin" id="t118" style='left:461.90px;top:436.60px;font:normal normal 11px/1 "DejaVu Sans Condensed", "Liberation Sans", sans-serif;color:#7b7b7b;letter-spacing:0.275px;'>0 1 1 0 0 0 0 0</span>
<span class="t hex" id="t119" style='left:493.40px;top:451.50px;font:normal normal 11px/1 "Liberation Sans", sans-serif;color:#7b7b7b;letter-spacing:-0.450px;'>60</span>
<span class="t bin" id="t120" style='left:551.90px;top:436.60px;font:normal normal 11px/1 "DejaVu Sans Condensed", "Liberation Sans", sans-serif;color:#7b7b7b;letter-spacing:0.275px;'>1 1 1 0 1 1 0 1</span>
<span class="t hex" id="t121" style='left:581.88px;top:451.50px;font:normal normal 11px/1 "Liberation Sans", sans-serif;color:#7b7b7b;letter-spacing:-0.450px;'>ED</span>
<span class="t bin" id="t122" style='left:641.90px;top:436.60px;font:normal normal 11px/1 "DejaVu Sans Condensed", "Liberation Sans", sans-serif;color:#7b7b7b;letter-spacing:0.275px;'>0 0 0 0 0 0 0 0</span>
<span class="t hex" id="t123" style='left:673.40px;top:451.50px;font:normal normal 11px/1 "Liberation Sans", sans-serif;color:#7b7b7b;letter-spacing:-0.450px;'>00</span>
<span class="t bin" id="t124" style='left:731.90px;top:436.60px;font:normal normal 11px/1 "DejaVu Sans Condensed", "Liberation Sans", sans-serif;color:#7b7b7b;letter-spacing:0.275px;'>0 0 0 0 0 0 0 0</span>
<span class="t hex" id="t125" style='left:763.40px;top:451.50px;font:normal normal 11px/1 "Liberation Sans", sans-serif;color:#7b7b7b;letter-spacing:-0.450px;'>00</span>
<span class="t bin" id="t126" style='left:821.90px;top:436.60px;font:normal normal 11px/1 "DejaVu Sans Condensed", "Liberation Sans", sans-serif;color:#7b7b7b;letter-spacing:0.275px;'>0 0 0 0 0 0 0 0</span>
<span class="t hex" id="t127" style='left:853.40px;top:451.50px;font:normal normal 11px/1 "Liberation Sans", sans-serif;color:#7b7b7b;letter-spacing:-0.450px;'>00</span>
<span class="t bin" id="t128" style='left:911.90px;top:436.60px;font:normal normal 11px/1 "DejaVu Sans Condensed", "Liberation Sans", sans-serif;color:#7b7b7b;letter-spacing:0.275px;'>0 0 0 0 0 0 0 0</span>
<span class="t hex" id="t129" style='left:943.40px;top:451.50px;font:normal normal 11px/1 "Liberation Sans", sans-serif;color:#7b7b7b;letter-spacing:-0.450px;'>00</span>
<span class="t bin" id="t130" style='left:1001.90px;top:436.60px;font:normal normal 11px/1 "DejaVu Sans Condensed", "Liberation Sans", sans-serif;color:#7b7b7b;letter-spacing:0.275px;'>1 1 1 1 1 1 1 1</span>
<span class="t hex" id="t131" style='left:1032.80px;top:451.50px;font:normal normal 11px/1 "Liberation Sans", sans-serif;color:#7b7b7b;letter-spacing:-0.450px;'>FF</span>
<div class="rowline" style="top:495px"></div>
<svg class="abs" style="left:224px;top:474px" width="24" height="13" viewBox="0 0 24 13">
<path d="M1.5 6.2 Q12 -4 22.5 6.2 Q12 16.4 1.5 6.2 Z" fill="#fff" stroke="#232a8c" stroke-width="2" stroke-linejoin="round"/>
<circle cx="12" cy="6.1" r="4.9" fill="#232a8c"/><circle cx="10.5" cy="5.1" r="1.1" fill="#fff"/></svg>
<span class="t " id="t132" style='left:288.90px;top:475.60px;font:normal normal 11px/1 "Liberation Sans", sans-serif;color:#000;letter-spacing:-0.413px;'>0CFF0C00</span>
<span class="t bin" id="t133" style='left:371.90px;top:467.60px;font:normal normal 11px/1 "DejaVu Sans Condensed", "Liberation Sans", sans-serif;color:#7b7b7b;letter-spacing:0.275px;'>0 0 0 0 0 0 0 0</span>
<span class="t hex" id="t134" style='left:403.40px;top:482.50px;font:normal normal 11px/1 "Liberation Sans", sans-serif;color:#7b7b7b;letter-spacing:-0.450px;'>00</span>
<span class="t bin" id="t135" style='left:461.90px;top:467.60px;font:normal normal 11px/1 "DejaVu Sans Condensed", "Liberation Sans", sans-serif;color:#7b7b7b;letter-spacing:0.275px;'>0 1 1 1 0 1 1 1</span>
<span class="t hex" id="t136" style='left:493.40px;top:482.50px;font:normal normal 11px/1 "Liberation Sans", sans-serif;color:#7b7b7b;letter-spacing:-0.450px;'>77</span>
<span class="t bin" id="t137" style='left:551.90px;top:467.60px;font:normal normal 11px/1 "DejaVu Sans Condensed", "Liberation Sans", sans-serif;color:#7b7b7b;letter-spacing:0.275px;'>0 1 1 1 1 0 0 0</span>
<span class="t hex" id="t138" style='left:583.40px;top:482.50px;font:normal normal 11px/1 "Liberation Sans", sans-serif;color:#7b7b7b;letter-spacing:-0.450px;'>78</span>
<span class="t bin" id="t139" style='left:641.90px;top:467.60px;font:normal normal 11px/1 "DejaVu Sans Condensed", "Liberation Sans", sans-serif;color:#7b7b7b;letter-spacing:0.275px;'>0 0 0 0 0 0 0 0</span>
<span class="t hex" id="t140" style='left:673.40px;top:482.50px;font:normal normal 11px/1 "Liberation Sans", sans-serif;color:#7b7b7b;letter-spacing:-0.450px;'>00</span>
<span class="t bin" id="t141" style='left:731.90px;top:467.60px;font:normal normal 11px/1 "DejaVu Sans Condensed", "Liberation Sans", sans-serif;color:#7b7b7b;letter-spacing:0.275px;'>0 0 0 0 0 0 0 0</span>
<span class="t hex" id="t142" style='left:763.40px;top:482.50px;font:normal normal 11px/1 "Liberation Sans", sans-serif;color:#7b7b7b;letter-spacing:-0.450px;'>00</span>
<span class="t bin" id="t143" style='left:821.90px;top:467.60px;font:normal normal 11px/1 "DejaVu Sans Condensed", "Liberation Sans", sans-serif;color:#7b7b7b;letter-spacing:0.275px;'>0 0 0 0 0 0 0 0</span>
<span class="t hex" id="t144" style='left:853.40px;top:482.50px;font:normal normal 11px/1 "Liberation Sans", sans-serif;color:#7b7b7b;letter-spacing:-0.450px;'>00</span>
<span class="t bin" id="t145" style='left:911.90px;top:467.60px;font:normal normal 11px/1 "DejaVu Sans Condensed", "Liberation Sans", sans-serif;color:#7b7b7b;letter-spacing:0.275px;'>0 0 0 0 0 0 0 0</span>
<span class="t hex" id="t146" style='left:943.40px;top:482.50px;font:normal normal 11px/1 "Liberation Sans", sans-serif;color:#7b7b7b;letter-spacing:-0.450px;'>00</span>
<span class="t bin" id="t147" style='left:1001.90px;top:467.60px;font:normal normal 11px/1 "DejaVu Sans Condensed", "Liberation Sans", sans-serif;color:#7b7b7b;letter-spacing:0.275px;'>0 0 0 0 0 0 0 0</span>
<span class="t hex" id="t148" style='left:1033.40px;top:482.50px;font:normal normal 11px/1 "Liberation Sans", sans-serif;color:#7b7b7b;letter-spacing:-0.450px;'>00</span>
<div class="rowline" style="top:526px"></div>
<svg class="abs" style="left:224px;top:505px" width="24" height="13" viewBox="0 0 24 13">
<path d="M1.5 6.2 Q12 -4 22.5 6.2 Q12 16.4 1.5 6.2 Z" fill="#fff" stroke="#232a8c" stroke-width="2" stroke-linejoin="round"/>
<circle cx="12" cy="6.1" r="4.9" fill="#232a8c"/><circle cx="10.5" cy="5.1" r="1.1" fill="#fff"/></svg>
<span class="t " id="t149" style='left:288.90px;top:506.60px;font:normal normal 11px/1 "Liberation Sans", sans-serif;color:#000;letter-spacing:-0.263px;'>18EBFF00</span>
<span class="t bin" id="t150" style='left:371.90px;top:498.60px;font:normal normal 11px/1 "DejaVu Sans Condensed", "Liberation Sans", sans-serif;color:#7b7b7b;letter-spacing:0.275px;'>0 0 0 0 0</span>
<span class="t bin" id="t151" style='left:421.90px;top:498.60px;font:normal normal 11px/1 "DejaVu Sans Condensed", "Liberation Sans", sans-serif;color:#7c1a28;letter-spacing:0.275px;'>1 0 0</span>
<span class="t hex" id="t152" style='left:403.40px;top:513.50px;font:normal normal 11px/1 "Liberation Sans", sans-serif;color:#7c1a28;letter-spacing:-0.450px;'>04</span>
<span class="t bin" id="t153" style='left:461.90px;top:498.60px;font:normal normal 11px/1 "DejaVu Sans Condensed", "Liberation Sans", sans-serif;color:#7c1a28;letter-spacing:0.275px;'>1 1 1 1 1 1 1 1</span>
<span class="t hex" id="t154" style='left:492.80px;top:513.50px;font:normal normal 11px/1 "Liberation Sans", sans-serif;color:#7c1a28;letter-spacing:-0.450px;'>FF</span>
<span class="t bin" id="t155" style='left:551.90px;top:498.60px;font:normal normal 11px/1 "DejaVu Sans Condensed", "Liberation Sans", sans-serif;color:#7c1a28;letter-spacing:0.275px;'>1 1 1</span>
<span class="t bin" id="t156" style='left:581.90px;top:498.60px;font:normal normal 11px/1 "DejaVu Sans Condensed", "Liberation Sans", sans-serif;color:#7b7b7b;letter-spacing:0.275px;'>1</span>
<span class="t bin" id="t157" style='left:591.90px;top:498.60px;font:normal normal 11px/1 "DejaVu Sans Condensed", "Liberation Sans", sans-serif;color:#7c1a28;letter-spacing:0.275px;'>1 1 1 1</span>
<span class="t hex" id="t158" style='left:582.80px;top:513.50px;font:normal normal 11px/1 "Liberation Sans", sans-serif;color:#7c1a28;letter-spacing:-0.450px;'>FF</span>
<span class="t bin" id="t159" style='left:641.90px;top:498.60px;font:normal normal 11px/1 "DejaVu Sans Condensed", "Liberation Sans", sans-serif;color:#7c1a28;letter-spacing:0.275px;'>1 1 1 1 1 1 1 1</span>
<span class="t hex" id="t160" style='left:672.80px;top:513.50px;font:normal normal 11px/1 "Liberation Sans", sans-serif;color:#7c1a28;letter-spacing:-0.450px;'>FF</span>
<span class="t bin" id="t161" style='left:731.90px;top:498.60px;font:normal normal 11px/1 "DejaVu Sans Condensed", "Liberation Sans", sans-serif;color:#7c1a28;letter-spacing:0.275px;'>0 0 1 1 0 0 1 0</span>
<span class="t hex" id="t162" style='left:763.40px;top:513.50px;font:normal normal 11px/1 "Liberation Sans", sans-serif;color:#7c1a28;letter-spacing:-0.450px;'>32</span>
<span class="t bin" id="t163" style='left:821.90px;top:498.60px;font:normal normal 11px/1 "DejaVu Sans Condensed", "Liberation Sans", sans-serif;color:#7c1a28;letter-spacing:0.275px;'>1 1 1 1 1 0 1 0</span>
<span class="t hex" id="t164" style='left:852.80px;top:513.50px;font:normal normal 11px/1 "Liberation Sans", sans-serif;color:#7c1a28;letter-spacing:-0.450px;'>FA</span>
<span class="t bin" id="t165" style='left:911.90px;top:498.60px;font:normal normal 11px/1 "DejaVu Sans Condensed", "Liberation Sans", sans-serif;color:#7c1a28;letter-spacing:0.275px;'>0 1 1 1 1 1</span>
<span class="t bin" id="t166" style='left:971.90px;top:498.60px;font:normal normal 11px/1 "DejaVu Sans Condensed", "Liberation Sans", sans-serif;color:#7b7b7b;letter-spacing:0.275px;'>0</span>
<span class="t bin" id="t167" style='left:981.90px;top:498.60px;font:normal normal 11px/1 "DejaVu Sans Condensed", "Liberation Sans", sans-serif;color:#7c1a28;letter-spacing:0.275px;'>1</span>
<span class="t hex" id="t168" style='left:942.49px;top:513.50px;font:normal normal 11px/1 "Liberation Sans", sans-serif;color:#7c1a28;letter-spacing:-0.450px;'>7D</span>
<span class="t bin" id="t169" style='left:1001.90px;top:498.60px;font:normal normal 11px/1 "DejaVu Sans Condensed", "Liberation Sans", sans-serif;color:#7c1a28;letter-spacing:0.275px;'>1 1 1 0 0</span>
<span class="t bin" id="t170" style='left:1051.90px;top:498.60px;font:normal normal 11px/1 "DejaVu Sans Condensed", "Liberation Sans", sans-serif;color:#7b7b7b;letter-spacing:0.275px;'>0 0</span>
<span class="t bin" id="t171" style='left:1071.90px;top:498.60px;font:normal normal 11px/1 "DejaVu Sans Condensed", "Liberation Sans", sans-serif;color:#7c1a28;letter-spacing:0.275px;'>1</span>
<span class="t hex" id="t172" style='left:1032.79px;top:513.50px;font:normal normal 11px/1 "Liberation Sans", sans-serif;color:#7c1a28;letter-spacing:-0.450px;'>E1</span>
<div class="rowline" style="top:557px"></div>
<span class="t bin" id="t173" style='left:371.90px;top:529.60px;font:normal normal 11px/1 "DejaVu Sans Condensed", "Liberation Sans", sans-serif;color:#7b7b7b;letter-spacing:0.275px;'>0 0 1 0 0 0 0 0</span>
<span class="t bin" id="t174" style='left:461.90px;top:529.60px;font:normal normal 11px/1 "DejaVu Sans Condensed", "Liberation Sans", sans-serif;color:#7b7b7b;letter-spacing:0.275px;'>0 0 0 1 1 1 0 0</span>
<span class="t bin" id="t175" style='left:551.90px;top:529.60px;font:normal normal 11px/1 "DejaVu Sans Condensed", "Liberation Sans", sans-serif;color:#7b7b7b;letter-spacing:0.275px;'>0 0 0 0 0 0 0 0</span>
<span class="t bin" id="t176" style='left:641.90px;top:529.60px;font:normal normal 11px/1 "DejaVu Sans Condensed", "Liberation Sans", sans-serif;color:#7b7b7b;letter-spacing:0.275px;'>0 0 0 0 0 1 0 0</span>
<span class="t bin" id="t177" style='left:731.90px;top:529.60px;font:normal normal 11px/1 "DejaVu Sans Condensed", "Liberation Sans", sans-serif;color:#7b7b7b;letter-spacing:0.275px;'>1 1 1 1 1 1 1 1</span>
<span class="t bin" id="t178" style='left:821.90px;top:529.60px;font:normal normal 11px/1 "DejaVu Sans Condensed", "Liberation Sans", sans-serif;color:#7b7b7b;letter-spacing:0.275px;'>1 1 1 0 0 0 1 1</span>
<span class="t bin" id="t179" style='left:911.90px;top:529.60px;font:normal normal 11px/1 "DejaVu Sans Condensed", "Liberation Sans", sans-serif;color:#7b7b7b;letter-spacing:0.275px;'>1 1 1 1 1 1 1 0</span>
<span class="t bin" id="t180" style='left:1001.90px;top:529.60px;font:normal normal 11px/1 "DejaVu Sans Condensed", "Liberation Sans", sans-serif;color:#7b7b7b;letter-spacing:0.275px;'>0 0 0 0 0 0 0 0</span>
<svg class="abs" style="left:1088px;top:374px" width="24" height="26" viewBox="0 0 24 26">
<path d="M4.4 7.7 Q2.4 7.7 2.4 9.4 Q2.4 10.6 3.1 11.3 L7.7 15.6 V21.5 Q9.25 23.8 10.8 21.5 V15.6 L19 7.7 Z" fill="#fff" stroke="#232a8c" stroke-width="1.6" stroke-linejoin="round"/>
<circle cx="17.4" cy="7.3" r="5" fill="#232a8c"/><path d="M14.6 7.3 H20.2 M17.4 4.5 V10.1" stroke="#dfe6ff" stroke-width="1.5"/></svg>
<svg class="abs" style="left:1116px;top:376px" width="28" height="22" viewBox="0 0 28 22">
<rect x="2.6" y="8" width="17.4" height="11" rx="1.2" fill="#fff" stroke="#232a8c" stroke-width="1.5"/>
<path d="M3 8.6 L11.3 14.6 L19.6 8.6 M3 18.4 L8.6 12.8 M19.6 18.4 L14 12.8" fill="none" stroke="#232a8c" stroke-width="1.3"/>
<circle cx="20.3" cy="7.9" r="5" fill="#232a8c"/><path d="M17.5 7.9 H23.1 M20.3 5.1 V10.7" stroke="#dfe6ff" stroke-width="1.5"/></svg>
<div class="vsb"><svg class="abs" style="left:3px;top:5px" width="10" height="8" viewBox="0 0 10 8"><path d="M1 6.4 L4.6 2.3 L8.2 6.4" stroke="#484848" stroke-width="2" fill="none"/></svg><div class="vth"></div><svg class="abs" style="left:3px;top:235px" width="10" height="8" viewBox="0 0 10 8"><path d="M1 1.6 L4.6 5.7 L8.2 1.6" stroke="#484848" stroke-width="2" fill="none"/></svg></div>
<div class="hsb"><div class="hth"></div></div>
</div>
</div></body></html>
